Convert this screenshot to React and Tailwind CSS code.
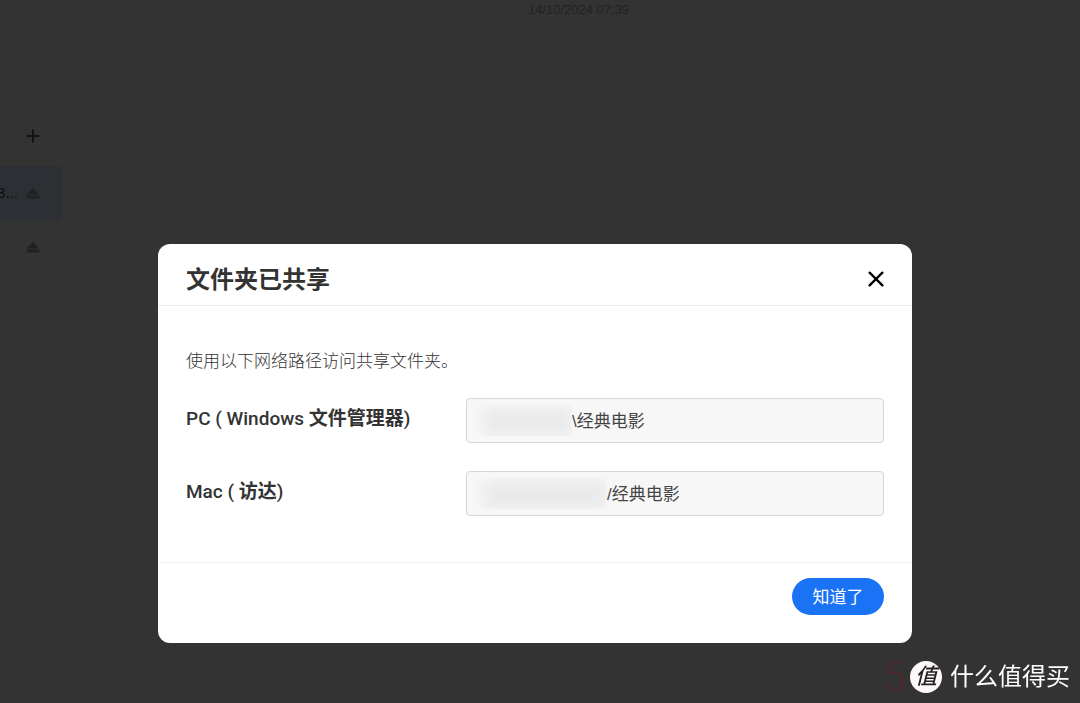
import { useState } from "react";

const FONT = "font-['Liberation_Sans','Noto_Sans_CJK_SC',sans-serif]";

const PATHS = [
  { id: "pc", system: "PC ( Windows ", app: "文件管理器", value: "\\经典电影", pad: "pl-[105px]", mask: "w-[104px]" },
  { id: "mac", system: "Mac ( ", app: "访达", value: "/经典电影", pad: "pl-[140px]", mask: "w-[139px]" },
];

function EjectIcon() {
  return (
    <svg viewBox="0 0 14 12" className="w-3.5 h-3 shrink-0" fill="#202122" aria-hidden="true">
      <path d="M7 0.4 13 7.4H1Z" />
      <rect x="0.6" y="8.6" width="12.8" height="3" rx="0.4" />
    </svg>
  );
}

function Sidebar() {
  return (
    <aside className="w-[77px] shrink-0 border-r border-[#303030] pt-[116px]">
      <div className="w-[62px] flex flex-col">
        <button type="button" aria-label="Add" className="self-end mr-[22px] h-10 flex items-center">
          <svg viewBox="0 0 14 14" className="w-3.5 h-3.5" stroke="#0c0c0c" strokeWidth="1.6" aria-hidden="true">
            <path d="M7 0.5V13.5M0.5 7H13.5" />
          </svg>
        </button>
        <div className="mt-2.5 h-[54px] bg-[#2c3035] flex items-center justify-end gap-2 pr-[22px] overflow-hidden">
          <span className="shrink-0 text-[15px] text-[#0e0f10] whitespace-nowrap">B...</span>
          <EjectIcon />
        </div>
        <div className="h-[54px] flex items-center justify-end pr-[22px]">
          <EjectIcon />
        </div>
      </div>
    </aside>
  );
}

function PathRow({ id, system, app, value, pad, mask }) {
  return (
    <div className="flex items-start">
      <label htmlFor={id} className="w-[280px] shrink-0 pt-[7px] text-[19px] leading-7 font-medium font-[Roboto,'Noto_Sans_CJK_SC',sans-serif]">
        {system}
        <span className="font-bold">{app}</span>)
      </label>
      <div className="relative flex-1">
        <input
          id={id}
          readOnly
          defaultValue={value}
          className={`w-full h-[45px] pb-0.5 rounded border border-[#d6d6d6] bg-[#f7f7f7] text-[17px] text-[#444] outline-none ${pad}`}
        />
        <span className={`absolute left-0.5 top-1.5 h-8 overflow-hidden ${mask}`}>
          <span className="block ml-4 mt-1 h-7 bg-[#eaeaea] blur-[6px]" />
        </span>
      </div>
    </div>
  );
}

function ShareDialog({ onClose }) {
  return (
    <div className="fixed inset-0 flex items-end justify-center pb-[60px] pr-2.5">
      <div role="dialog" aria-labelledby="share-title" className="w-full max-w-[754px] rounded-xl bg-white text-[#333]">
        <header className="flex items-center justify-between px-7 pt-[18px] pb-2 h-[62px] border-b border-[#ebebeb]">
          <h2 id="share-title" className="text-2xl font-bold">文件夹已共享</h2>
          <button type="button" aria-label="Close" onClick={onClose} className="pb-0.5">
            <svg viewBox="0 0 16 16" className="w-4 h-4" stroke="#000" strokeWidth="2.3" strokeLinecap="round" aria-hidden="true">
              <path d="M1.6 1.6 14.4 14.4M14.4 1.6 1.6 14.4" />
            </svg>
          </button>
        </header>
        <div className="px-7 pt-[42px] pb-[46px]">
          <p className="text-[17px] leading-7 font-light text-[#333]">使用以下网络路径访问共享文件夹。</p>
          <div className="mt-[22px] flex flex-col gap-7">
            {PATHS.map((p) => (
              <PathRow key={p.id} {...p} />
            ))}
          </div>
        </div>
        <footer className="flex justify-end px-7 pt-[15px] pb-7 border-t border-[#f2f2f2]">
          <button type="button" onClick={onClose} className="h-[37px] min-w-[92px] px-5 pt-0.5 rounded-full bg-[#1a73f5] text-white text-[17px]">
            知道了
          </button>
        </footer>
      </div>
    </div>
  );
}

function Watermark() {
  return (
    <div className="fixed right-2.5 bottom-2.5 flex items-center">
      <span className="mr-1 text-[42px] leading-8 font-light text-[#4d2a2d] font-[Roboto,sans-serif]">5</span>
      <span className="mr-2 w-8 h-8 rounded-full bg-[#fff8f8] text-[#222] flex items-center justify-center text-[22px] leading-8 font-medium italic">
        值
      </span>
      <span className="text-2xl leading-8 text-white">什么值得买</span>
    </div>
  );
}

export default function App() {
  const [open, setOpen] = useState(true);

  return (
    <div className={`min-h-screen flex bg-[#333] overflow-hidden ${FONT}`}>
      <Sidebar />
      <main className="flex-1 text-center">
        <time className="block mt-0.5 text-[13px] leading-4 text-[#222]">14/10/2024 07:39</time>
      </main>
      {open && <ShareDialog onClose={() => setOpen(false)} />}
      <Watermark />
    </div>
  );
}
